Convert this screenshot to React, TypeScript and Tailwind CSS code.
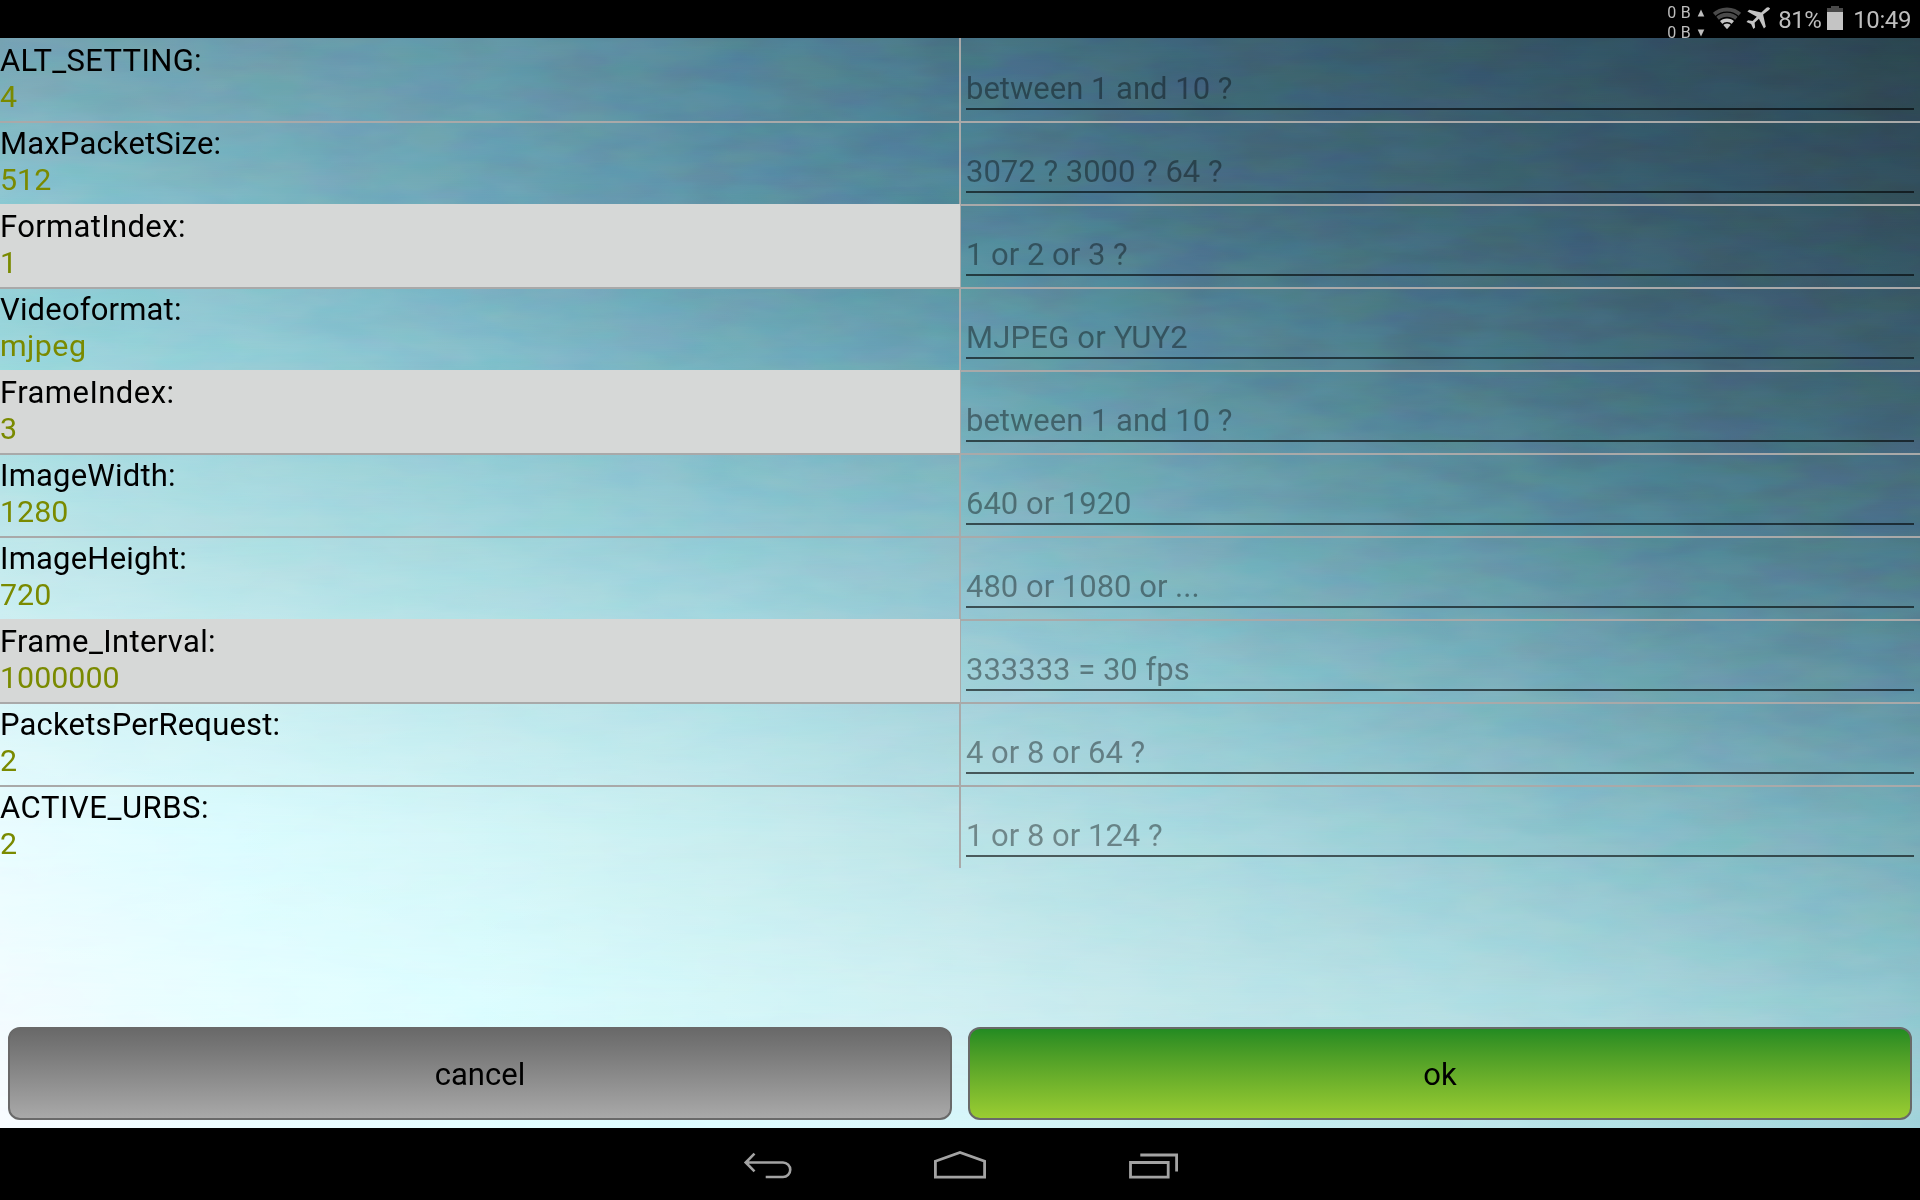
import React from "react";

type Row = {
  label: string;
  labelSpacing: number;
  value: string;
  valueSpacing?: number;
  hint: string;
  hintSpacing?: number;
  active?: boolean;
};

const rows: Row[] = [
  { label: "ALT_SETTING:", labelSpacing: 0.33, value: "4", hint: "between 1 and 10 ?" },
  { label: "MaxPacketSize:", labelSpacing: 0.17, value: "512", hint: "3072 ? 3000 ? 64 ?" },
  { label: "FormatIndex:", labelSpacing: 0.35, value: "1", hint: "1 or 2 or 3 ?", active: true },
  { label: "Videoformat:", labelSpacing: 0.17, value: "mjpeg", valueSpacing: 0.45, hint: "MJPEG or YUY2", hintSpacing: 0.2 },
  { label: "FrameIndex:", labelSpacing: 0.45, value: "3", hint: "between 1 and 10 ?", active: true },
  { label: "ImageWidth:", labelSpacing: 0.2, value: "1280", hint: "640 or 1920" },
  { label: "ImageHeight:", labelSpacing: 0.2, value: "720", hint: "480 or 1080 or ..." },
  { label: "Frame_Interval:", labelSpacing: 0.35, value: "1000000", hint: "333333 = 30 fps", active: true },
  { label: "PacketsPerRequest:", labelSpacing: 0.17, value: "2", hint: "4 or 8 or 64 ?" },
  { label: "ACTIVE_URBS:", labelSpacing: 0.55, value: "2", hint: "1 or 8 or 124 ?" },
];

// Colour grid of the sky: each band is a horizontal gradient, blended into the one above it.
const bands: { y: number; colors: string }[] = [
  { y: 0, colors: "#74a4b2,#6c9cac,#6396a8,#548498,#487488,#3d6275,#375869,#314f5f,#2c4550" },
  { y: 162, colors: "#8cc8d2,#7cb5c3,#6da5b6,#5e93a8,#50859a,#466f83,#3f6577,#38596a,#324e5c" },
  { y: 322, colors: "#9cd8dd,#94cdd7,#84becc,#74aebd,#68a3b1,#588c9d,#4b788a,#42687a,#3b5d6d" },
  { y: 482, colors: "#bce6ea,#addde2,#a0d5dc,#90c8d3,#86bcc8,#72aab8,#6097a6,#508294,#497283" },
  { y: 642, colors: "#d8f5f8,#cbeff2,#bde7eb,#b0dfe6,#a2d0da,#8dc5cf,#7db3c0,#6b9fae,#5e8ea0" },
  { y: 802, colors: "#eafdff,#dcfcff,#d4f6f8,#c9eef0,#bce4e8,#abdae0,#99ccd5,#86bdc8,#76adb9" },
  { y: 962, colors: "#f2fcff,#e6feff,#dcfdff,#d4f6f8,#cfeff2,#c0e6ea,#b3dfe4,#a3d3da,#8fc5ce" },
  { y: 1090, colors: "#f8fcff,#ecfdff,#e4feff,#defcff,#d9f6fa,#ccf0f2,#c0e8ec,#b2dfe4,#a4d4dc" },
];

function Sky() {
  return (
    <div className="absolute inset-0 overflow-hidden">
      {bands.map((b, i) => {
        const mask = i ? `linear-gradient(to bottom, transparent ${bands[i - 1].y}px, #000 ${b.y}px)` : undefined;
        return (
          <div
            key={b.y}
            className="absolute inset-0"
            style={{ backgroundImage: `linear-gradient(to right, ${b.colors})`, maskImage: mask }}
          />
        );
      })}
      <svg className="absolute inset-0 h-full w-full opacity-[0.04] mix-blend-overlay">
        <filter id="grain" x="0" y="0" width="100%" height="100%" colorInterpolationFilters="sRGB">
          <feTurbulence type="fractalNoise" baseFrequency="0.013 0.04" numOctaves={3} seed={7} />
          <feComponentTransfer>
            <feFuncR type="linear" slope="2.4" intercept="-0.7" />
            <feFuncG type="linear" slope="2.4" intercept="-0.65" />
            <feFuncB type="linear" slope="2.4" intercept="-0.7" />
            <feFuncA type="linear" slope="0" intercept="1" />
          </feComponentTransfer>
        </filter>
        <rect width="100%" height="100%" filter="url(#grain)" />
      </svg>
    </div>
  );
}

function StatusBar() {
  return (
    <header className="flex h-[38px] justify-end overflow-hidden bg-black pr-[9px] text-[#bebebe]">
      <div className="mt-[3px] mr-[7px] flex flex-col text-[16px] leading-5">
        <div className="flex h-5 shrink-0 items-center gap-[6px]">
          <span className="whitespace-nowrap tracking-[0.3px]">0 B</span>
          <svg width="8" height="8" viewBox="0 0 8 8" fill="currentColor"><path d="M4 .5 7.3 7.5H.7z" /></svg>
        </div>
        <div className="flex h-5 shrink-0 items-center gap-[6px]">
          <span className="whitespace-nowrap tracking-[0.3px]">0 B</span>
          <svg width="8" height="8" viewBox="0 0 8 8" fill="currentColor"><path d="M4 7.5 7.3.5H.7z" /></svg>
        </div>
      </div>
      <svg className="mt-[7px] mr-[4px]" width="30" height="23" viewBox="0 0 30 23" fill="none">
        <clipPath id="fan"><path d="M15 22.300-4 0H34z" /></clipPath>
        <g clipPath="url(#fan)">
          <circle cx="15" cy="22.300" r="19.800" stroke="#4a4a4a" strokeWidth="3.800" />
          <circle cx="15" cy="22.300" r="14.500" stroke="#4a4a4a" strokeWidth="4" />
          <circle cx="15" cy="22.300" r="9" stroke="#c4c4c4" strokeWidth="3.600" />
          <circle cx="15" cy="22.300" r="5.900" fill="#c4c4c4" />
        </g>
      </svg>
      <svg className="mt-[7px] mr-[7px]" width="25" height="23" viewBox="0 0 25 23" fill="#c4c4c4">
        <path d="M23.600.9c-1.200-1-2.800-.5-4 .6l-4.300 3.900L3.200 2.700 1.400 4.500l9.400 5.200-4.200 4.200-4.600-.6L.5 14.900l4.600 2.200 2.300 4.800 1.700-1.500-.5-4.600 4.300-4 5 9.700 1.900-1.700-2.700-12.300 5.500-4.200c1.100-1 1.900-1.600 1-2.400z" />
      </svg>
      <span className="text-[24px] leading-[40px] tracking-[-0.5px]">81%</span>
      <svg className="mt-[6px] mr-[10px] ml-[6px]" width="16" height="24" viewBox="0 0 16 24">
        <path d="M4 0h8v2h4v4H0V2h4z" fill="#4a4a4a" />
        <path d="M0 6h16v18H0z" fill="#c4c4c4" />
      </svg>
      <span className="text-[24px] leading-[40px] tracking-[-0.4px]">10:49</span>
    </header>
  );
}

function SettingRow({ row, first }: { row: Row; first: boolean }) {
  const line = first ? "border-transparent" : "border-[#a9a9a9]";
  return (
    <div className="flex h-[83px]">
      <div
        className={
          row.active
            ? "w-[960px] bg-[#d6d8d7] pt-[2px]"
            : `w-[959px] border-t-2 ${line}`
        }
      >
        <div className="h-[38px] pt-[2px] text-[31px] leading-[37px] text-black" style={{ letterSpacing: row.labelSpacing }}>
          {row.label}
        </div>
        <div className="text-[30.4px] leading-[37px] text-[#7a8a00]" style={{ letterSpacing: row.valueSpacing ?? 0 }}>
          {row.value}
        </div>
      </div>
      <div className={row.active ? "w-px bg-[#a9a9a9]" : "w-[2px] bg-[#a9a9a9]"} />
      <div className={`flex-1 border-t-2 pr-[6px] pl-[5px] ${line}`}>
        <div
          className="h-[70px] border-b-2 border-black/60 pt-[30px] text-[31px] leading-[37px] text-black/40"
          style={{ letterSpacing: row.hintSpacing ?? 0 }}
        >
          {row.hint}
        </div>
      </div>
    </div>
  );
}

function NavBar() {
  return (
    <nav className="flex h-[72px] items-center justify-center gap-[132px] bg-black">
      <svg width="60" height="72" viewBox="738 1128 60 72" fill="none" stroke="#a3a3a3" strokeWidth="2.6">
        <path d="M754.500 1153.700 745.700 1162.500 754.500 1171.300M746 1162.500H783a7.250 7.250 0 0 1 0 14.500H765.700" />
      </svg>
      <svg width="60" height="72" viewBox="930 1128 60 72" fill="none" stroke="#a3a3a3" strokeWidth="2.800">
        <path d="M935.400 1161.300 960 1152.500 984.600 1161.300V1177.200H935.400z" />
      </svg>
      <svg width="60" height="72" viewBox="1122 1128 60 72" fill="none" stroke="#a3a3a3" strokeWidth="2.800">
        <path d="M1130.500 1162.500H1168.200V1177.200H1130.500zM1140.300 1155H1176.600V1171.500" />
      </svg>
    </nav>
  );
}

export default function App() {
  return (
    <div className="flex h-[1200px] w-[1920px] flex-col overflow-hidden font-['Roboto',sans-serif]">
      <StatusBar />
      <main className="relative h-[1090px]">
        <Sky />
        <div className="relative flex h-full flex-col justify-between">
          <div>
            {rows.map((r, i) => (
              <SettingRow key={r.label} row={r} first={i === 0} />
            ))}
          </div>
          <div className="grid grid-cols-2 gap-4 px-2 pb-2">
            <button className="h-[93px] rounded-xl border-2 border-[#696969] bg-linear-to-b from-[#696969] to-[#a9a9a9] pt-[3px] text-[31px] text-black">
              cancel
            </button>
            <button className="h-[93px] rounded-xl border-2 border-[#696969] bg-linear-to-b from-[#228b22] to-[#9acd32] pt-[3px] text-[31px] text-black">
              ok
            </button>
          </div>
        </div>
      </main>
      <NavBar />
    </div>
  );
}
